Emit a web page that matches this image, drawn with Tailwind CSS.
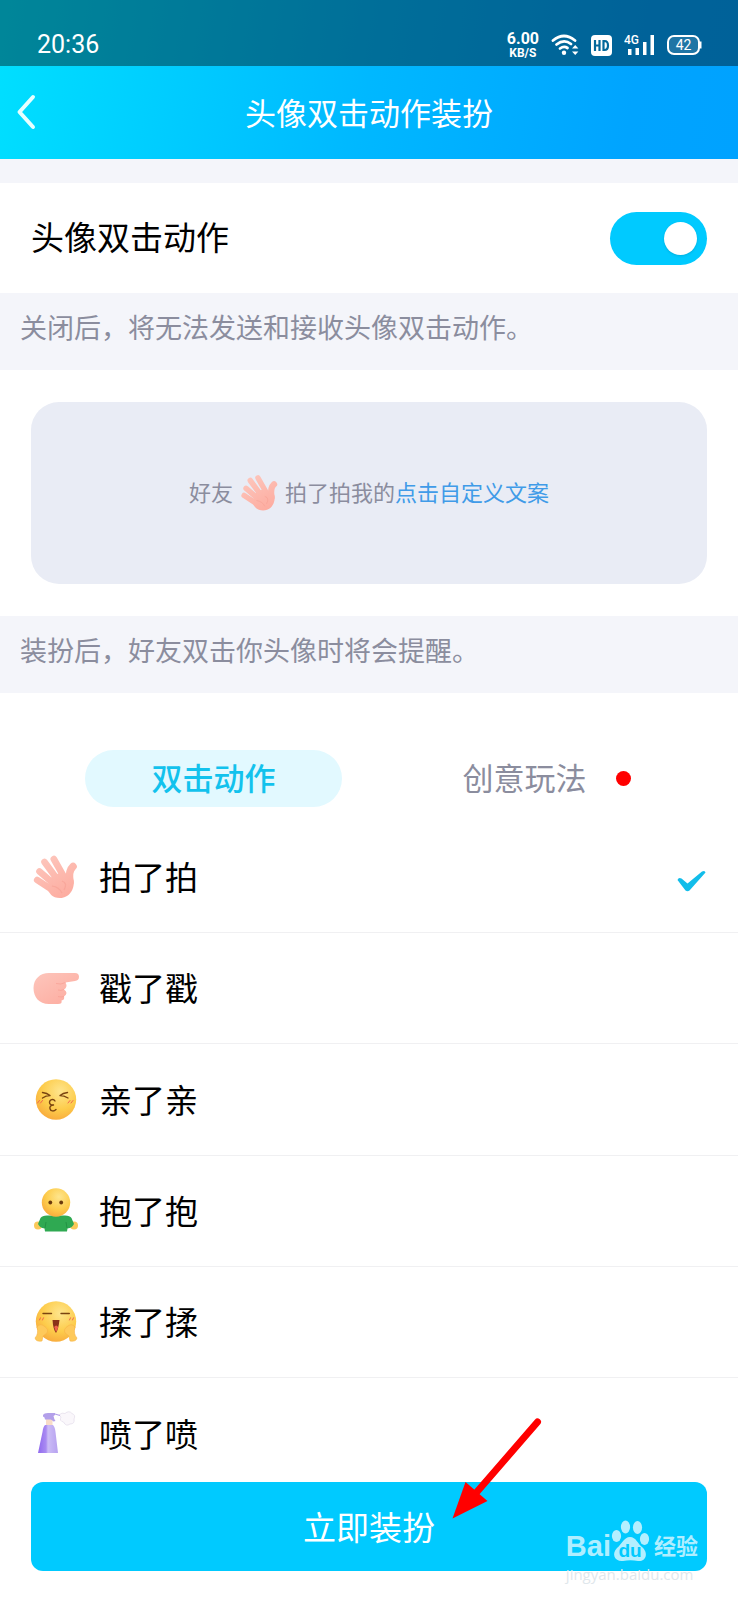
<!DOCTYPE html>
<html lang="zh-CN">
<head>
  <meta charset="UTF-8" />
  <meta name="viewport" content="width=device-width, initial-scale=1.0" />
  <title>头像双击动作装扮</title>
  <script src="https://cdn.jsdelivr.net/npm/@tailwindcss/browser@4"></script>
</head>
<body class="min-h-screen bg-white text-black font-['Noto_Sans_CJK_SC',sans-serif]">

  <!-- Shared drawings -->
  <svg class="absolute h-0 w-0" aria-hidden="true">
    <defs>
      <linearGradient id="skin" gradientUnits="userSpaceOnUse" x1="10" y1="6" x2="32" y2="44">
        <stop offset="0" stop-color="#fdc5bb" />
        <stop offset="1" stop-color="#fdada1" />
      </linearGradient>
      <radialGradient id="face" cx="0.6" cy="0.3" r="0.75">
        <stop offset="0" stop-color="#fee58d" />
        <stop offset="0.6" stop-color="#fdcc4b" />
        <stop offset="1" stop-color="#f8a93c" />
      </radialGradient>
      <linearGradient id="bottle" x1="0" y1="0" x2="1" y2="0">
        <stop offset="0" stop-color="#9069ee" />
        <stop offset="0.4" stop-color="#a98bf2" />
        <stop offset="0.5" stop-color="#cbbcf6" />
        <stop offset="1" stop-color="#b7a2f0" />
      </linearGradient>
      <symbol id="wave" viewBox="0 0 48 48">
        <g stroke="url(#skin)" stroke-width="6.6" stroke-linecap="round" fill="none">
          <path d="M6.200 27 L20 36" />
          <path d="M8.500 18.500 L23 31" />
          <path d="M13.500 9 L26 26" />
          <path d="M22.800 6 L33 24" />
          <path d="M42 13.500 Q37 18 39 29" stroke-width="7.600" />
        </g>
        <path fill="url(#skin)" d="M19 26 C22 21 31 18 35 22 L38 20 L42.500 27 C44 35 39 45 29 45 C21 45 18 40 16 35 Z" />
        <path d="M31 28 Q37 30 33 37 M21 33 Q28 34 31 40" stroke="#f69b90" stroke-width="1.200" stroke-opacity="0.5" fill="none" />
      </symbol>
      <symbol id="tick" viewBox="0 0 30 24">
        <path d="M0.500 11 Q1.500 8 4.500 9.500 L10.500 14.500 L25 2.500 Q28 1 28.500 3.500 L12.500 21.500 Q10.500 23 8.500 21.500 Z" fill="#12bdea" />
      </symbol>
    </defs>
  </svg>

  <header class="bg-[linear-gradient(100deg,#00e0ff_0%,#00b8ff_50%,#00a4ff_85%,#00a2ff_100%)] text-white">
    <!-- Status bar -->
    <div class="flex h-[66px] items-center justify-between bg-black/40 pt-6 pr-9 pl-[37px] font-[Roboto,sans-serif]">
      <span class="text-[25px] leading-8">20:36</span>
      <div class="flex items-center gap-3">
        <div class="text-center font-bold">
          <p class="text-[16px] leading-4">6.00</p>
          <p class="text-[12px] leading-3">KB/S</p>
        </div>
        <svg class="h-[22px] w-7" viewBox="0 0 28 22" fill="none" stroke="#fff" stroke-width="2.800" stroke-linecap="round">
          <path d="M2 6.500 Q13 -2.500 24 6.500" />
          <path d="M5.500 10.500 Q13 4.500 20 10" />
          <path d="M9 14.500 Q13 11.500 16.500 14" />
          <circle cx="13" cy="18.800" r="2.200" fill="#fff" stroke="none" />
          <path d="M21 14.500 L24.200 11 L27.400 14.500 Z M21 17.500 L24.200 21 L27.400 17.500 Z" fill="#fff" stroke="none" />
        </svg>
        <svg class="h-[21px] w-[21px]" viewBox="0 0 21 21">
          <rect width="21" height="21" rx="4" fill="#fff" />
          <path d="M4 5 V16 M8.500 5 V16 M4 10.500 H8.500 M12.500 6 V15 H13.500 Q17 15 17 10.500 Q17 6 13.500 6 Z" fill="none" stroke="#04679a" stroke-width="2.200" />
        </svg>
        <svg class="h-[22px] w-[31px]" viewBox="0 0 31 22" fill="#fff">
          <text x="0" y="10" font-size="12" font-weight="500" font-family="Roboto, sans-serif">4G</text>
          <rect x="4" y="15" width="3.500" height="6" />
          <rect x="11.500" y="14" width="3.500" height="7" />
          <rect x="19" y="8" width="3.500" height="13" />
          <rect x="26.500" y="1" width="3.500" height="20" />
        </svg>
        <svg class="h-5 w-[35px]" viewBox="0 0 35 20">
          <rect x="1" y="1" width="31" height="18" rx="6" fill="#fff" fill-opacity="0.120" stroke="#fff" stroke-width="2" />
          <path d="M33.500 6.500 V13.500" stroke="#fff" stroke-width="2" />
          <text x="16.500" y="15" font-size="14" font-family="Roboto, sans-serif" text-anchor="middle" fill="#fff">42</text>
        </svg>
      </div>
    </div>

    <!-- Title bar -->
    <div class="grid h-[93px] grid-cols-[1fr_auto_1fr] items-center px-4 pb-0.5">
      <a href="#" aria-label="返回">
        <svg class="h-9 w-5" viewBox="0 0 20 36" fill="none" stroke="#e6ffff" stroke-width="4" stroke-linecap="round" stroke-linejoin="round">
          <path d="M17 3 L3.500 18 L17 33" />
        </svg>
      </a>
      <h1 class="text-[31px] leading-10">头像双击动作装扮</h1>
    </div>
  </header>

  <main class="pb-[111px]">
    <div class="h-6 bg-[#f4f5fa]"></div>

    <!-- Switch -->
    <div class="flex h-[110px] items-center justify-between px-[31px]">
      <label for="tapSwitch" class="pb-1 text-[33px] leading-10">头像双击动作</label>
      <input type="checkbox" id="tapSwitch" checked class="flex h-[53px] w-[97px] appearance-none items-center rounded-full bg-gray-300 px-[10px] before:h-[33px] before:w-[33px] before:rounded-full before:bg-white before:shadow-sm before:content-[''] checked:justify-end checked:bg-[#00caff]" />
    </div>
    <p class="bg-[#f4f5fa] px-5 pt-[14px] pb-[23px] text-[27px] leading-10 text-[#8b8d9e]">关闭后，将无法发送和接收头像双击动作。</p>

    <!-- Preview -->
    <div class="px-[31px] py-8">
      <div class="flex h-[182px] items-center justify-center gap-[6px] rounded-[28px] bg-[#e9ecf5] text-[22px] leading-8 text-[#8b8d9e]">
        <span class="pb-1">好友</span>
        <svg class="h-10 w-10"><use href="#wave" /></svg>
        <span class="pb-1">拍了拍我的<a href="#" class="text-[#409be8]">点击自定义文案</a></span>
      </div>
    </div>
    <p class="bg-[#f4f5fa] px-5 pt-[14px] pb-[23px] text-[27px] leading-10 text-[#8b8d9e]">装扮后，好友双击你头像时将会提醒。</p>

    <!-- Tabs -->
    <div class="grid grid-cols-2 gap-[54px] px-[85px] pt-[57px] pb-[14px] text-[31px] leading-10">
      <button type="button" class="h-[57px] rounded-full bg-[#e2f9ff] pb-1 font-medium text-[#12c2ed]">双击动作</button>
      <button type="button" class="relative h-[57px] rounded-full pb-1 text-[#8b8d9e]">
        创意玩法
        <span class="absolute top-[21px] right-[22px] h-[15px] w-[15px] rounded-full bg-[#ff0000]"></span>
      </button>
    </div>

    <!-- Actions -->
    <form class="divide-y divide-[#f0f0f2] text-[33px] leading-10">
      <label class="flex h-[112px] items-center gap-5 px-[31px]">
        <input type="radio" name="action" class="peer sr-only" checked />
        <svg class="h-12 w-12"><use href="#wave" /></svg>
        <span class="pb-0.5">拍了拍</span>
        <svg class="mt-2 ml-auto hidden h-6 w-[30px] peer-checked:block"><use href="#tick" /></svg>
      </label>

      <label class="flex h-[111px] items-center gap-5 px-[31px]">
        <input type="radio" name="action" class="peer sr-only" />
        <svg class="h-12 w-12" viewBox="0 0 48 48">
          <path fill="url(#skin)" d="M18 9 H44 Q48 9 48 12.800 Q48 16.800 44 17 L34.500 18.500 Q37 23 33 25.500 Q38 29 33 32.500 Q34 36 30.500 36.500 Q31.500 40 27 40 H18 C8 40 2.500 33 2.500 24 C2.500 15 9 9 18 9 Z" />
          <path d="M34.500 18.500 Q30 21 25 19.500 M33 25.500 Q30 27 27 26 M33 32.500 Q30 33.500 27 32.500" stroke="#f69b90" stroke-width="1" stroke-opacity="0.6" fill="none" />
        </svg>
        <span class="pb-0.5">戳了戳</span>
        <svg class="mt-2 ml-auto hidden h-6 w-[30px] peer-checked:block"><use href="#tick" /></svg>
      </label>

      <label class="flex h-[112px] items-center gap-5 px-[31px]">
        <input type="radio" name="action" class="peer sr-only" />
        <svg class="h-12 w-12" viewBox="0 0 48 48" fill="none" stroke-linecap="round" stroke-linejoin="round">
          <circle cx="25" cy="23.500" r="20.200" fill="url(#face)" />
          <path d="M11.500 16.500 Q16 17 19 19.500 Q15 19.500 11.500 22 M36.500 16.500 Q32 17 29 19.500 Q33 19.500 37 22" stroke="#7a4410" stroke-width="1.400" />
          <path d="M24 25 C22.500 22.500 18.500 23.500 18.500 26.500 C18.500 28.500 20.500 29.200 22.500 29 C19.500 29.200 18.500 31 19 32.800 C19.700 35.500 23 35.500 25 33.500" stroke="#7a4410" stroke-width="1.400" />
          <path d="M6.500 27 L8.500 24.500 M9.500 27 L11.500 24.500 M37 27 L39 24.500 M40 27 L42 24.500" stroke="#f2654e" stroke-width="1" />
        </svg>
        <span class="pb-0.5">亲了亲</span>
        <svg class="mt-2 ml-auto hidden h-6 w-[30px] peer-checked:block"><use href="#tick" /></svg>
      </label>

      <label class="flex h-[111px] items-center gap-5 px-[31px]">
        <input type="radio" name="action" class="peer sr-only" />
        <svg class="h-12 w-12" viewBox="0 0 48 48">
          <circle cx="7" cy="38.500" r="4" fill="#fbc95a" />
          <circle cx="43" cy="38.500" r="4" fill="#fbc95a" />
          <path d="M16 28.500 Q11 28.500 9.500 31 L7 37 Q9 41 13.500 41.500 L14 44.500 H36 L36.500 41.500 Q41 41 43 37 L40.500 31 Q39 28.500 34 28.500 Z" fill="#2fa952" />
          <path d="M14 41 L15 35 M36 41 L35 35" stroke="#1f8c40" stroke-width="0.800" fill="none" />
          <circle cx="25" cy="15.500" r="14.200" fill="url(#face)" />
          <circle cx="19.300" cy="15.500" r="1.900" fill="#6b3a0c" />
          <circle cx="30.200" cy="15.500" r="1.900" fill="#6b3a0c" />
        </svg>
        <span class="pb-0.5">抱了抱</span>
        <svg class="mt-2 ml-auto hidden h-6 w-[30px] peer-checked:block"><use href="#tick" /></svg>
      </label>

      <label class="flex h-[111px] items-center gap-5 px-[31px]">
        <input type="radio" name="action" class="peer sr-only" />
        <svg class="h-12 w-12" viewBox="0 0 48 48" fill="none" stroke-linecap="round">
          <circle cx="25" cy="23.500" r="20.200" fill="url(#face)" />
          <path d="M12 15.500 H20.500 M30 15.500 H38.300" stroke="#7a4410" stroke-width="1.400" />
          <path d="M21.500 22 H28.500 Q27.500 31 25 35 Q22 31 21.500 22 Z" fill="#8a3218" />
          <path d="M23.200 29 Q25 26 27.200 29 Q26.500 32 25 34 Z" fill="#f0604c" />
          <path d="M8.500 22 L9.500 19.800 M11.500 22 L12.500 19.800 M38.500 22 L39.500 19.800 M41.500 22 L42.500 19.800" stroke="#f2654e" stroke-width="1" />
          <path d="M6 29 Q9 25 13 28 Q18 31 16 35 L12 38 L11 43 Q5 44 4 40 Q8 36 6 29 Z M44 29 Q41 25 37 28 Q32 31 34 35 L38 38 L39 43 Q45 44 46 40 Q42 36 44 29 Z" fill="#fec95a" stroke="#f6b347" stroke-width="0.600" />
        </svg>
        <span class="pb-0.5">揉了揉</span>
        <svg class="mt-2 ml-auto hidden h-6 w-[30px] peer-checked:block"><use href="#tick" /></svg>
      </label>

      <label class="flex h-[111px] items-center gap-5 px-[31px]">
        <input type="radio" name="action" class="peer sr-only" />
        <svg class="h-12 w-12" viewBox="0 0 48 48">
          <path d="M28 5 Q31 2 34 3.500 Q38 0 41 3.500 Q45 5 43 9 Q44 14 39 14 Q35 17 32.500 12 Q28 11 30 7 Z" fill="#faf7fb" stroke="#e6dfec" stroke-width="0.800" />
          <rect x="15" y="9" width="6.500" height="6" fill="#f8dcc8" />
          <path d="M12 5 Q13 3 17 3 H24 V5 L22.500 6 Q23 9 24.500 11 L22.500 11.500 Q20 9 19.500 9.500 H14 Q14 7 12 6.500 Z" fill="#b3a0ea" />
          <path d="M24 4 L29 5.500" stroke="#b3a0ea" stroke-width="1.200" />
          <path d="M14 15 H22 Q24 17 24.500 22 L27 43 H7 L11.500 22 Q12 17 14 15 Z" fill="url(#bottle)" />
        </svg>
        <span class="pb-0.5">喷了喷</span>
        <svg class="mt-2 ml-auto hidden h-6 w-[30px] peer-checked:block"><use href="#tick" /></svg>
      </label>
    </form>
  </main>

  <!-- Bottom button -->
  <footer class="fixed inset-x-0 bottom-0 bg-white px-[31px] pt-7 pb-[29px]">
    <button type="button" class="h-[89px] w-full rounded-xl bg-[#00caff] pb-0.5 text-[33px] leading-10 text-white">立即装扮</button>

    <!-- Pointer arrow -->
    <svg class="pointer-events-none absolute -top-10 left-[61%] h-[108px] w-24" viewBox="0 0 96 108">
      <path d="M87.500 8 L26 79" stroke="#ff0000" stroke-width="7" stroke-linecap="round" />
      <path d="M2.500 104.500 L15.500 68 L37.500 87 Z" fill="#ff0000" />
    </svg>

    <!-- Watermark -->
    <div class="pointer-events-none absolute right-10 bottom-[14px] text-white/70">
      <div class="flex items-end">
        <span class="font-['Liberation_Sans',sans-serif] text-[29px] leading-8 font-bold">Bai</span>
        <svg class="h-[42px] w-[39px]" viewBox="0 0 39 42">
          <g fill="#fff" fill-opacity="0.700">
            <ellipse cx="5.500" cy="16" rx="4.600" ry="6" />
            <ellipse cx="14.500" cy="7" rx="4.600" ry="6.500" />
            <ellipse cx="26.500" cy="7.500" rx="4.600" ry="6.500" />
            <ellipse cx="33.500" cy="19" rx="4.600" ry="6" />
            <path d="M19 17 C25 17 27 24 31 27 C38 33 35 42 27 41 C22 40 17 40 12 41 C4 42 0 34 6 28 C11 24 13 17 19 17 Z" />
          </g>
          <text x="19" y="37" font-size="19" font-weight="700" font-family="Liberation Sans, sans-serif" text-anchor="middle" fill="#00caff">du</text>
        </svg>
        <span class="pb-0.5 pl-1 text-[22px] leading-8 font-bold">经验</span>
      </div>
      <p class="font-['Open_Sans',sans-serif] text-[15px] leading-6 text-[#dfe7ec]">jingyan.baidu.com</p>
    </div>
  </footer>

</body>
</html>
